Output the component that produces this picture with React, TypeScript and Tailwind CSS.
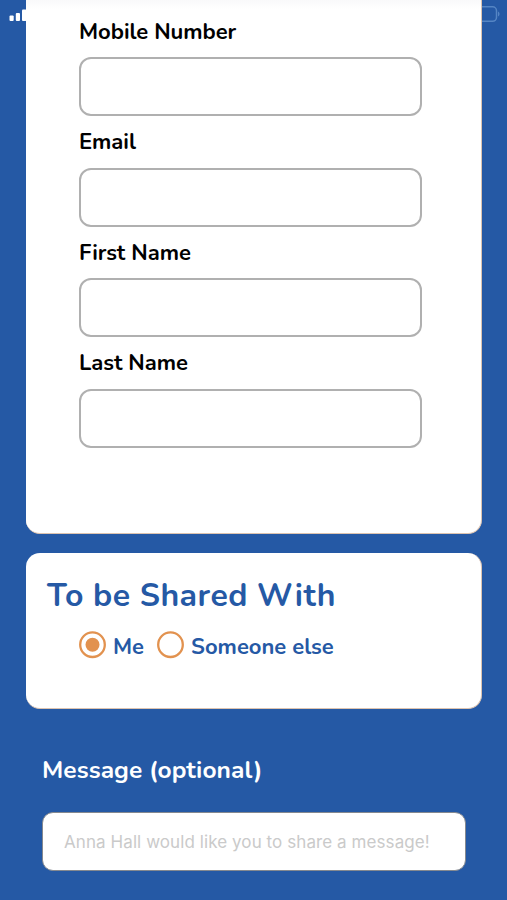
import { useState } from "react";

interface Field {
  id: string;
  label: string;
  type: string;
}

const fields: Field[] = [
  { id: "mobile", label: "Mobile Number", type: "tel" },
  { id: "email", label: "Email", type: "email" },
  { id: "first", label: "First Name", type: "text" },
  { id: "last", label: "Last Name", type: "text" },
];

const recipients = [
  { id: "me", label: "Me" },
  { id: "other", label: "Someone else" },
];

export default function App() {
  const [recipient, setRecipient] = useState("me");

  return (
    <div className="relative h-[900px] w-[507px] overflow-hidden bg-[#2559a5] font-['Nunito','Open_Sans',sans-serif]">
      {/* Status bar, mostly hidden by the scrolled card */}
      <div className="absolute inset-x-0 top-0 h-6">
        <svg className="absolute top-0 left-0" width="30" height="24" fill="#fff">
          <rect x="9.5" y="15.5" width="4.2" height="5.5" rx="1" />
          <rect x="15.8" y="13" width="4.2" height="8" rx="1" />
          <rect x="22" y="9.5" width="4.5" height="11.5" rx="1" />
        </svg>
        <svg className="absolute top-0 right-0" width="40" height="26" fill="none">
          <rect x="-4" y="6.8" width="33.5" height="14.5" rx="4" stroke="#5585c4" strokeWidth="1.5" />
          <path d="M31 11.5v5c2-.8 2-4.2 0-5Z" fill="#5585c4" />
        </svg>
      </div>

      <div className="relative flex flex-col pl-[26px]">
        {/* Contact details */}
        <section className="h-[534px] w-[456px] rounded-b-[14px] border-r border-b border-[#dcc3b0] bg-white bg-linear-to-b from-[#f9f9fa] to-white to-[9px] pt-[5.5px] pl-[53px]">
          {fields.map((field) => (
            <div key={field.id} className="h-[110.5px]">
              <label
                htmlFor={field.id}
                className="flex h-[51.5px] items-center pt-[2px] text-[22px] font-bold tracking-[-0.03px] whitespace-nowrap text-black"
              >
                {field.label}
              </label>
              <input
                id={field.id}
                type={field.type}
                className="block h-[59px] w-[343px] rounded-[12px] border-2 border-[#b0b0b0] bg-white px-4 outline-none"
              />
            </div>
          ))}
        </section>

        {/* Recipient */}
        <section className="mt-[19px] h-[156px] w-[456px] rounded-[14px] border-r border-b border-[#dcc3b0] bg-white pt-[22px] pl-[21px] text-[#2559a5]">
          <h2 className="text-[32px] leading-[42px] font-bold tracking-[0.5px] whitespace-nowrap">To be Shared With</h2>
          <div className="mt-[14px] flex items-center pl-[32px]">
            {recipients.map((item) => (
              <button
                key={item.id}
                className="mr-[13px] flex h-[28px] items-center gap-[7px]"
                onClick={() => setRecipient(item.id)}
              >
                <svg width="27" height="28" viewBox="0 0 27 28" fill="none">
                  <circle cx="13.5" cy="13.7" r="12.3" stroke="#e2924f" strokeWidth="2.3" />
                  {recipient === item.id && <circle cx="13.5" cy="13.7" r="7" fill="#e2924f" />}
                </svg>
                <span className="pt-[3px] text-[22px] leading-[28px] font-bold whitespace-nowrap">
                  {item.label}
                </span>
              </button>
            ))}
          </div>
        </section>

        {/* Message */}
        <section className="pt-[45px] pl-[16px]">
          <label htmlFor="message" className="block text-[24.5px] leading-[32px] font-bold tracking-[0.05px] whitespace-nowrap text-white">
            Message (optional)
          </label>
          <input
            id="message"
            placeholder="Anna Hall would like you to share a message!"
            className="mt-[26px] block h-[59px] w-[424px] rounded-[11px] border border-[#85898f] bg-white px-[21px] font-['Inter',sans-serif] text-[17px] tracking-[0.08px] outline-none placeholder:text-[#cacaca]"
          />
        </section>
      </div>
    </div>
  );
}
